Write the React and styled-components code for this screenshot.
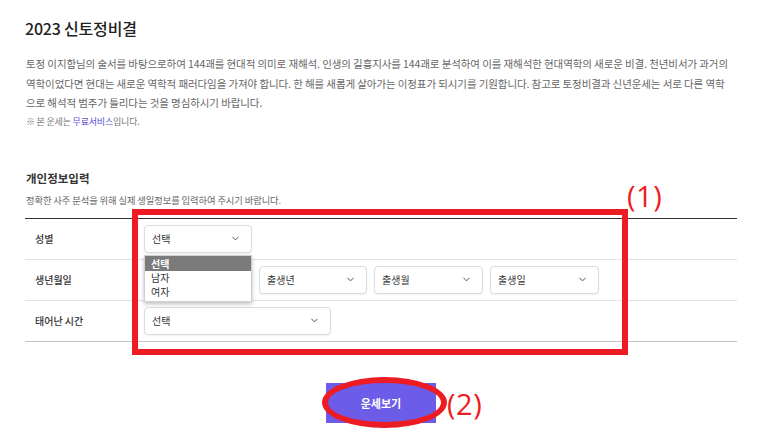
import React from "react";
import styled, { createGlobalStyle } from "styled-components";
import { ChevronDown } from "lucide-react";

const Global = createGlobalStyle`
  html, body { margin: 0; padding: 0; background: #fff; }
  body { font-family: "Noto Sans CJK KR", "Noto Sans", sans-serif; }
  * { box-sizing: border-box; }
`;

const Page = styled.div`
  position: relative;
  width: 773px;
  height: 440px;
  overflow: hidden;
  padding: 18px 36px 0 25px;
`;

const Title = styled.h1`
  margin: 0;
  font-size: 16px;
  line-height: 20px;
  font-weight: 500;
  color: #222;
  letter-spacing: -0.2px;
`;

const Desc = styled.p`
  margin: 16px 0 0 1px;
  font-size: 10.5px;
  line-height: 19.5px;
  color: #666;
  letter-spacing: -0.1px;
`;

const Line = styled.span`
  display: block;
  white-space: nowrap;
`;

const Note = styled.p`
  margin: 2px 0 0 1px;
  font-size: 9px;
  line-height: 14px;
  color: #777;
  letter-spacing: -0.2px;
`;

const Accent = styled.span`
  color: #5a4fd6;
`;

const SectionTitle = styled.h2`
  margin: 41px 0 0 1px;
  font-size: 11.5px;
  line-height: 16px;
  font-weight: 700;
  color: #333;
`;

const SubText = styled.p`
  margin: 7px 0 0 1px;
  font-size: 9.3px;
  line-height: 14px;
  color: #666;
  letter-spacing: -0.1px;
`;

const Table = styled.div`
  margin-top: 11px;
  border-top: 1px solid #333;
`;

const Row = styled.div`
  display: grid;
  grid-template-columns: 119px 1fr;
  align-items: center;
  height: 41px;
  border-bottom: 1px solid ${(p) => (p.$last ? "#c4c4c4" : "#e2e2e2")};
`;

const Label = styled.div`
  padding-left: 10px;
  font-size: 10px;
  font-weight: 500;
  color: #333;
`;

const Cell = styled.div`
  display: flex;
  gap: 7px;
  align-items: center;
`;

const SelectWrap = styled.div`
  position: relative;
  width: ${(p) => p.$w}px;
`;

const SelectBox = styled.div`
  height: 28px;
  display: flex;
  align-items: center;
  justify-content: space-between;
  padding: 0 10px 0 7px;
  border: 1px solid #dcdcdc;
  border-radius: 4px;
  background: #fff;
  box-shadow: 0 1px 2px rgba(0, 0, 0, 0.06);
  font-size: 10px;
  color: #333;
  svg { color: #444; }
`;

const Menu = styled.ul`
  position: absolute;
  left: 0;
  top: 30px;
  width: 100%;
  margin: 0;
  padding: 0 0 2px;
  list-style: none;
  background: #fff;
  border: 1px solid #d0d0d0;
  box-shadow: 0 2px 4px rgba(0, 0, 0, 0.25);
  z-index: 2;
`;

const MenuItem = styled.li`
  height: ${(p) => (p.$active ? 15 : 14)}px;
  line-height: ${(p) => (p.$active ? 15 : 14)}px;
  padding-left: 6px;
  font-size: 10px;
  font-weight: ${(p) => (p.$active ? 700 : 400)};
  color: ${(p) => (p.$active ? "#fff" : "#333")};
  background: ${(p) => (p.$active ? "#7a7a7a" : "transparent")};
`;

const ButtonRow = styled.div`
  display: flex;
  justify-content: center;
  margin-top: 41px;
`;

const Button = styled.button`
  width: 110px;
  height: 40px;
  border: 0;
  background: #6c5ce7;
  color: #fff;
  font-family: inherit;
  font-size: 11px;
  font-weight: 700;
`;

const RedBox = styled.div`
  position: absolute;
  left: 132px;
  top: 209px;
  width: 496px;
  height: 146px;
  border: 6px solid #ed1c24;
  pointer-events: none;
  z-index: 3;
`;

const RedEllipse = styled.div`
  position: absolute;
  left: 322px;
  top: 377px;
  width: 125px;
  height: 51px;
  border: 6px solid #ed1c24;
  border-radius: 50%;
  pointer-events: none;
  z-index: 3;
`;

const Marker = styled.div`
  position: absolute;
  left: ${(p) => p.$x}px;
  top: ${(p) => p.$y}px;
  font-family: "Open Sans", "Liberation Sans", sans-serif;
  font-size: 29px;
  line-height: 32px;
  letter-spacing: 0.5px;
  color: #ed1c24;
  z-index: 3;
`;

function Select({ w, label, children }) {
  return (
    <SelectWrap $w={w}>
      <SelectBox>
        <span>{label}</span>
        <ChevronDown size={11} strokeWidth={2} />
      </SelectBox>
      {children}
    </SelectWrap>
  );
}

export default function App() {
  return (
    <>
      <Global />
      <Page>
        <Title>2023 신토정비결</Title>
        <Desc>
          <Line>
            토정 이지함님의 술서를 바탕으로하여 144괘를 현대적 의미로 재해석. 인생의 길흉지사를 144괘로 분석하여 이를 재해석한 현대역학의 새로운 비결. 천년비서가 과거의
          </Line>
          <Line>
            역학이었다면 현대는 새로운 역학적 패러다임을 가져야 합니다. 한 해를 새롭게 살아가는 이정표가 되시기를 기원합니다. 참고로 토정비결과 신년운세는 서로 다른 역학
          </Line>
          <Line>으로 해석적 범주가 틀리다는 것을 명심하시기 바랍니다.</Line>
        </Desc>
        <Note>
          ※ 본 운세는 <Accent>무료서비스</Accent>입니다.
        </Note>

        <SectionTitle>개인정보입력</SectionTitle>
        <SubText>정확한 사주 분석을 위해 실제 생일정보를 입력하여 주시기 바랍니다.</SubText>

        <Table>
          <Row>
            <Label>성별</Label>
            <Cell>
              <Select w={108} label="선택">
                <Menu>
                  <MenuItem $active>선택</MenuItem>
                  <MenuItem>남자</MenuItem>
                  <MenuItem>여자</MenuItem>
                </Menu>
              </Select>
            </Cell>
          </Row>
          <Row>
            <Label>생년월일</Label>
            <Cell>
              <Select w={108} label="" />
              <Select w={108} label="출생년" />
              <Select w={109} label="출생월" />
              <Select w={109} label="출생일" />
            </Cell>
          </Row>
          <Row $last>
            <Label>태어난 시간</Label>
            <Cell>
              <Select w={187} label="선택" />
            </Cell>
          </Row>
        </Table>

        <ButtonRow>
          <Button>운세보기</Button>
        </ButtonRow>

        <RedBox />
        <RedEllipse />
        <Marker $x={627} $y={180}>(1)</Marker>
        <Marker $x={447} $y={388}>(2)</Marker>
      </Page>
    </>
  );
}
